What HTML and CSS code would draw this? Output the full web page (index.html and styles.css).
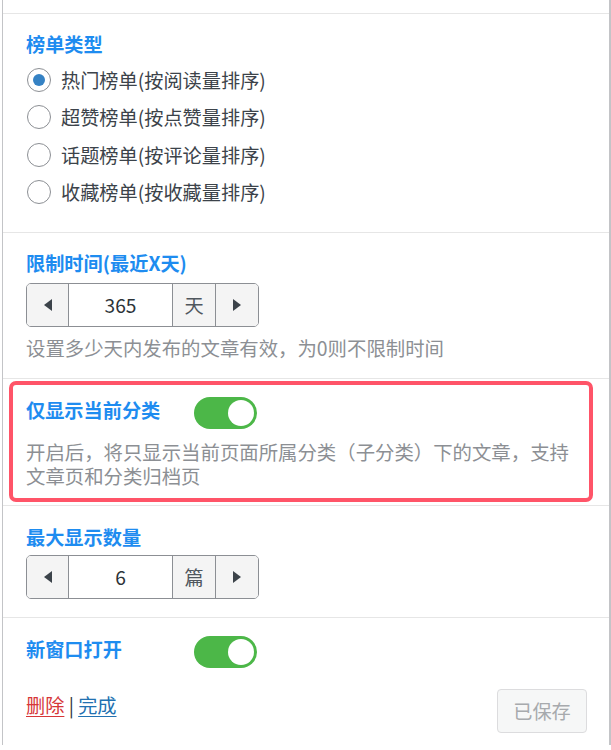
FILE: index.html
```html
<!DOCTYPE html>
<html lang="zh-CN">
<head>
<meta charset="utf-8">
<title>Widget</title>
<link rel="stylesheet" href="styles.css">
</head>
<body>
<div class="widget">
  <section class="sec sec-type">
    <h3 class="label">榜单类型</h3>
    <div class="radios">
      <label class="radio"><span class="dot checked"></span><span>热门榜单(按阅读量排序)</span></label>
      <label class="radio"><span class="dot"></span><span>超赞榜单(按点赞量排序)</span></label>
      <label class="radio"><span class="dot"></span><span>话题榜单(按评论量排序)</span></label>
      <label class="radio"><span class="dot"></span><span>收藏榜单(按收藏量排序)</span></label>
    </div>
  </section>

  <section class="sec sec-time">
    <h3 class="label">限制时间(最近X天)</h3>
    <div class="stepper">
      <span class="step-btn"><span class="tri left"></span></span>
      <span class="step-val">365</span>
      <span class="step-unit">天</span>
      <span class="step-btn"><span class="tri right"></span></span>
    </div>
    <p class="hint">设置多少天内发布的文章有效，为0则不限制时间</p>
  </section>

  <section class="sec sec-cat">
    <div class="toggle-row">
      <h3 class="label">仅显示当前分类</h3>
      <span class="switch on"><span class="knob"></span></span>
    </div>
    <p class="hint desc">开启后，将只显示当前页面所属分类（子分类）下的文章，支持文章页和分类归档页</p>
    <span class="highlight"></span>
  </section>

  <section class="sec sec-num">
    <h3 class="label">最大显示数量</h3>
    <div class="stepper">
      <span class="step-btn"><span class="tri left"></span></span>
      <span class="step-val">6</span>
      <span class="step-unit">篇</span>
      <span class="step-btn"><span class="tri right"></span></span>
    </div>
  </section>

  <section class="sec sec-new">
    <div class="toggle-row">
      <h3 class="label">新窗口打开</h3>
      <span class="switch on"><span class="knob"></span></span>
    </div>
    <div class="footer">
      <div class="links"><a class="del" href="#">删除</a> | <a class="done" href="#">完成</a></div>
      <button class="save" disabled>已保存</button>
    </div>
  </section>
</div>
</body>
</html>
```

FILE: styles.css
```css
* { box-sizing: border-box; }
html, body { margin: 0; padding: 0; background: #fff; }
body {
  font-family: "Noto Sans CJK SC", "Noto Sans", sans-serif;
  color: #3c434a;
  font-size: 19.2px;
}
.widget {
  margin-left: 2px;
  width: 609px;
  min-height: 745px;
  border-left: 1px solid #c3c4c7;
  border-right: 2px solid #c3c4c7;
  padding-top: 13px;
}
.sec {
  border-top: 1px solid #e6e6e6;
  padding: 0 22px 0 23px;
  position: relative;
}
.label {
  margin: 0;
  font-size: 19.2px;
  line-height: 26px;
  font-weight: 700;
  color: #1e8cf0;
}
.sec-type { padding-top: 17px; padding-bottom: 21px; }
.radios { margin-top: 4px; display: flex; flex-direction: column; }
.radio {
  display: flex;
  align-items: center;
  height: 37.5px;
  color: #3c434a;
  line-height: 26px;
}
.dot {
  width: 24px; height: 24px;
  border: 1px solid #8c8f94;
  border-radius: 50%;
  margin-left: 1px;
  margin-right: 10px;
  display: inline-flex;
  align-items: center;
  justify-content: center;
  background: #fff;
}
.dot.checked::after {
  content: "";
  width: 12px; height: 12px;
  border-radius: 50%;
  background: #3582c4;
}

.sec-time { padding-top: 17px; padding-bottom: 18px; }
.stepper {
  margin-top: 7px;
  display: flex;
  width: 233px;
  height: 44px;
  border: 1px solid #8c8f94;
  border-radius: 5px;
  overflow: hidden;
}
.step-btn, .step-unit {
  background: #f4f4f4;
  display: flex;
  align-items: center;
  justify-content: center;
}
.step-btn:first-child { width: 42px; border-right: 1px solid #8c8f94; }
.step-btn:last-child { flex: 1; }
.step-val {
  width: 104px;
  display: flex; align-items: center; justify-content: center;
  background: #fff;
  color: #2c3338;
  border-right: 1px solid #8c8f94;
}
.step-unit { width: 43px; border-right: 1px solid #8c8f94; color: #50575e; }
.tri { width: 0; height: 0; border-top: 6px solid transparent; border-bottom: 6px solid transparent; }
.tri.left { border-right: 8px solid #3c434a; }
.tri.right { border-left: 8px solid #3c434a; }
.hint {
  margin: 9px 0 0;
  color: #8c8f94;
  font-size: 19.4px;
  line-height: 24px;
}

.sec-cat { padding-top: 18px; padding-bottom: 17px; }
.toggle-row { display: grid; grid-template-columns: 168px 63px; align-items: start; }
.switch {
  width: 63px; height: 32px;
  border-radius: 16px;
  background: #4cb748;
  position: relative;
  display: block;
}
.knob {
  position: absolute;
  top: 3px; right: 3px;
  width: 26px; height: 26px;
  border-radius: 50%;
  background: #fff;
}
.desc { margin-top: 11px; }
.highlight {
  position: absolute;
  left: 6px; right: 16px;
  top: 2px; bottom: 3px;
  border: 4px solid #ff5468;
  border-radius: 7px;
  pointer-events: none;
}

.sec-num { padding-top: 18px; padding-bottom: 18px; }
.sec-num .stepper { margin-top: 5px; }

.sec-new { padding-top: 18px; padding-bottom: 12px; border-bottom: none; }
.footer {
  margin-top: 21px;
  display: flex;
  justify-content: space-between;
  align-items: flex-start;
}
.links { margin-top: 4px; line-height: 24px; color: #2c3338; }
.links a { text-decoration: underline; text-underline-offset: 3px; }
.del { color: #d63638; }
.done { color: #2271b1; }
.save {
  width: 90px; height: 44px;
  font-family: inherit;
  font-size: 19.2px;
  color: #a7aaad;
  background: #f6f7f7;
  border: 1px solid #dcdcde;
  border-radius: 4px;
  padding: 0;
}
```
